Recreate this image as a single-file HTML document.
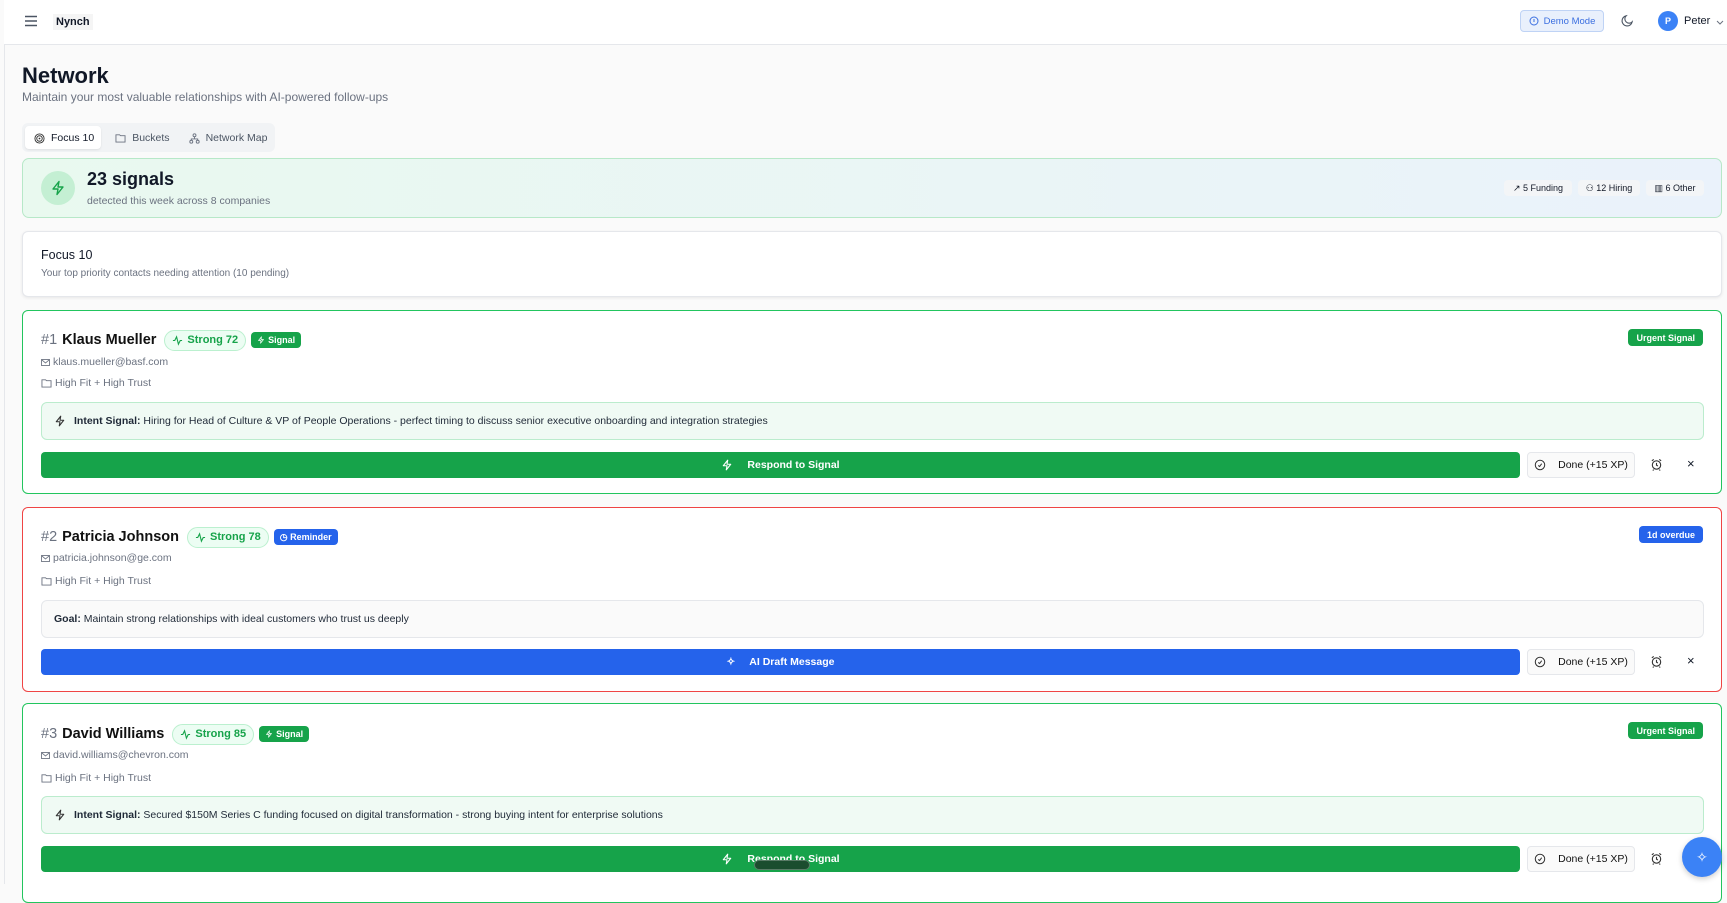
<!DOCTYPE html>
<html><head><meta charset="utf-8"><style>
*{box-sizing:border-box;margin:0;padding:0}
body{width:1727px;height:884px;overflow:hidden;background:#fafafa;font-family:"Liberation Sans",sans-serif;color:#111827;position:relative}
.abs{position:absolute}
.hdr{position:absolute;left:4px;top:0;right:0;height:45px;background:#fff;border-bottom:1px solid #e5e7eb}
.side{position:absolute;left:4px;top:0;bottom:0;width:1px;background:#e5e7eb}
svg{display:block}
.card{position:absolute;left:22px;width:1700px;background:#fff;border-radius:6px}
.name{position:absolute;left:18px;top:18px;height:22px;display:flex;align-items:center;gap:5px;font-size:14.5px}
.num{color:#6b7280}
.nm{font-weight:bold;color:#111}
.pill{display:inline-flex;align-items:center;gap:4px;height:21px;padding:0 7px;border:1px solid #bbf0cf;background:#ecfdf3;border-radius:11px;color:#16a34a;font-size:11px;font-weight:bold;margin-left:3px}
.bdg{display:inline-flex;align-items:center;gap:3px;height:16px;padding:0 6px;border-radius:4px;color:#fff;font-size:9px;font-weight:bold}
.em{position:absolute;left:18px;font-size:10.5px;color:#6b7280;display:flex;align-items:center;gap:3px}
.box{position:absolute;left:18px;width:1663px;height:38px;border-radius:6px;font-size:10.5px;display:flex;align-items:center;padding-left:12px;gap:8px;color:#1f2937}
.btn{position:absolute;left:18px;width:1479px;height:26px;border-radius:4px;color:#fff;font-size:10.5px;font-weight:bold;display:flex;align-items:center;justify-content:center;gap:14px}
.done{position:absolute;left:1504px;width:108px;height:26px;border:1px solid #e5e7eb;border-radius:4px;background:#fafafa;font-size:10.5px;display:flex;align-items:center;justify-content:center;gap:12px;color:#111}
.tr{position:absolute;right:18px;top:18px}
</style></head><body>
<svg width="0" height="0" style="position:absolute">
<defs>
<symbol id="bolt" viewBox="0 0 16 16"><path d="M9 1.5L3 9h5l-1 5.5L13 7H8z" fill="none" stroke="currentColor" stroke-width="1.4" stroke-linejoin="round"/></symbol>
<symbol id="alarm" viewBox="0 0 14 14"><circle cx="7" cy="7.5" r="4.5" fill="none" stroke="#333" stroke-width="1.2"/><path d="M7 5.3v2.4l1.5 1M2 3l2-1.5M12 3l-2-1.5M4 12.5l-1 1M10 12.5l1 1" fill="none" stroke="#333" stroke-width="1.2"/></symbol>
<symbol id="check" viewBox="0 0 14 14"><circle cx="7" cy="7" r="5.5" fill="none" stroke="#333" stroke-width="1.2"/><path d="M5 7.5l1.5 1.3L9 5.5" fill="none" stroke="#333" stroke-width="1.2"/></symbol>
<symbol id="folder" viewBox="0 0 12 11"><path d="M1 2h4l1 1h5v7H1z" fill="none" stroke="#6b7280"/></symbol>
<symbol id="mail" viewBox="0 0 10 8"><rect x=".5" y=".5" width="9" height="7" fill="none" stroke="#6b7280"/><path d="M.5 .8L5 4.5 9.5.8" fill="none" stroke="#6b7280"/></symbol>
<symbol id="act" viewBox="0 0 12 12"><path d="M1 6h2l2-4 2 8 2-4h2" fill="none" stroke="#16a34a" stroke-width="1.2"/></symbol>
</defs></svg>
<div class="side"></div>
<div class="hdr">
  <svg class="abs" style="left:20px;top:15px" width="14" height="12" viewBox="0 0 14 12"><path d="M1 1.5h12M1 6h12M1 10.5h12" stroke="#4b5563" stroke-width="1.4"/></svg>
  <div class="abs" style="left:49px;top:14px;background:#f5f5f5;padding:2px 3px;font-size:11px;font-weight:bold">Nynch</div>
  <div class="abs" style="left:1516px;top:10px;width:84px;height:22px;border:1px solid #bfd3f5;background:#e9f0fc;border-radius:4px;color:#3b6fe0;font-size:9.5px;display:flex;align-items:center;justify-content:center;gap:5px"><svg width="10" height="10" viewBox="0 0 10 10"><circle cx="5" cy="5" r="4" fill="none" stroke="#3b6fe0"/><path d="M5 3v3" stroke="#3b6fe0"/></svg>Demo Mode</div>
  <svg class="abs" style="left:1617px;top:14px" width="13" height="13" viewBox="0 0 14 14"><path d="M12 8.5A5.5 5.5 0 1 1 5.5 2a4.3 4.3 0 0 0 6.5 6.5z" fill="none" stroke="#4b5563" stroke-width="1.2"/></svg>
  <div class="abs" style="left:1654px;top:11px;width:20px;height:20px;border-radius:50%;background:#3b82f6;color:#fff;font-size:9px;font-weight:bold;display:flex;align-items:center;justify-content:center">P</div>
  <div class="abs" style="left:1680px;top:15px;font-size:11px">Peter</div>
  <svg class="abs" style="left:1712px;top:20px" width="8" height="5" viewBox="0 0 8 5"><path d="M1 1l3 3 3-3" fill="none" stroke="#6b7280"/></svg>
</div>

<div class="abs" style="left:22px;top:63px;font-size:22px;font-weight:bold">Network</div>
<div class="abs" style="left:22px;top:90px;font-size:12px;color:#6b7280">Maintain your most valuable relationships with AI-powered follow-ups</div>

<div class="abs" style="left:22px;top:123px;width:253px;height:29px;background:#f1f3f5;border-radius:6px"></div>
<div class="abs" style="left:25px;top:126px;width:76px;height:23px;background:#fff;border-radius:4px;box-shadow:0 1px 2px rgba(0,0,0,.08)"></div>
<div class="abs" style="left:34px;top:132px;display:flex;align-items:center;gap:6px;font-size:10.5px">
  <svg width="11" height="11" viewBox="0 0 12 12"><circle cx="6" cy="6" r="5" fill="none" stroke="#333"/><circle cx="6" cy="6" r="3" fill="none" stroke="#333"/><circle cx="6" cy="6" r="1" fill="#333"/></svg>Focus 10
  <svg style="margin-left:15px" width="11" height="10" viewBox="0 0 12 11"><use href="#folder"/></svg><span style="color:#4b5563">Buckets</span>
  <svg style="margin-left:13px" width="11" height="11" viewBox="0 0 12 12"><circle cx="6" cy="2.5" r="1.6" fill="none" stroke="#6b7280"/><circle cx="2.5" cy="9.5" r="1.6" fill="none" stroke="#6b7280"/><circle cx="9.5" cy="9.5" r="1.6" fill="none" stroke="#6b7280"/><path d="M6 4v2.5M2.5 8V6.5h7V8" fill="none" stroke="#6b7280"/></svg><span style="color:#4b5563">Network Map</span>
</div>

<div class="abs" style="left:22px;top:158px;width:1700px;height:60px;border:1px solid #b7e8c8;border-radius:7px;background:linear-gradient(90deg,#e9f9ef,#eaf2fb)">
  <div class="abs" style="left:18px;top:12px;width:34px;height:34px;border-radius:50%;background:#c4efd3;display:flex;align-items:center;justify-content:center;color:#16a34a"><svg width="16" height="16"><use href="#bolt"/></svg></div>
  <div class="abs" style="left:64px;top:10px;font-size:18px;font-weight:bold">23 signals</div>
  <div class="abs" style="left:64px;top:36px;font-size:10.5px;color:#6b7280">detected this week across 8 companies</div>
  <div class="abs" style="left:1481px;top:21px;width:68px;height:16px;background:#f3f5f7;border-radius:4px;font-size:9px;display:flex;align-items:center;justify-content:center">↗ 5 Funding</div>
  <div class="abs" style="left:1555px;top:21px;width:62px;height:16px;background:#f3f5f7;border-radius:4px;font-size:9px;display:flex;align-items:center;justify-content:center">⚇ 12 Hiring</div>
  <div class="abs" style="left:1623px;top:21px;width:58px;height:16px;background:#f3f5f7;border-radius:4px;font-size:9px;display:flex;align-items:center;justify-content:center">▥ 6 Other</div>
</div>

<div class="abs" style="left:22px;top:231px;width:1700px;height:66px;background:#fff;border:1px solid #e5e7eb;border-radius:6px;box-shadow:0 1px 3px rgba(0,0,0,.08)">
  <div class="abs" style="left:18px;top:16px;font-size:12.5px">Focus 10</div>
  <div class="abs" style="left:18px;top:36px;font-size:10px;color:#6b7280">Your top priority contacts needing attention (10 pending)</div>
</div>

<!-- card 1 -->
<div class="card" style="top:310px;height:184px;border:1px solid #22c55e">
  <div class="name"><span class="num">#1</span><span class="nm">Klaus Mueller</span><span class="pill"><svg width="11" height="11"><use href="#act"/></svg>Strong 72</span><span class="bdg" style="background:#16a34a"><svg width="8" height="8" style="color:#fff"><use href="#bolt"/></svg>Signal</span></div>
  <div class="bdg tr" style="background:#16a34a;height:17px;padding:0 8px">Urgent Signal</div>
  <div class="em" style="top:45px"><svg width="9" height="7"><use href="#mail"/></svg>klaus.mueller@basf.com</div>
  <div class="em" style="top:66px"><svg width="11" height="10"><use href="#folder"/></svg>High Fit + High Trust</div>
  <div class="box" style="top:91px;background:#f0faf4;border:1px solid #bbeccd"><svg width="12" height="12" style="color:#333"><use href="#bolt"/></svg><span><b>Intent Signal:</b> Hiring for Head of Culture &amp; VP of People Operations - perfect timing to discuss senior executive onboarding and integration strategies</span></div>
  <div class="btn" style="top:141px;background:#16a34a"><svg width="12" height="12" style="color:#fff"><use href="#bolt"/></svg>Respond to Signal</div>
  <div class="done" style="top:141px"><svg width="12" height="12"><use href="#check"/></svg>Done (+15 XP)</div>
  <svg class="abs" style="left:1627px;top:147px" width="13" height="13"><use href="#alarm"/></svg>
  <div class="abs" style="left:1664px;top:145px;font-size:13px">×</div>
</div>

<!-- card 2 -->
<div class="card" style="top:507px;height:185px;border:1px solid #ef4444">
  <div class="name"><span class="num">#2</span><span class="nm">Patricia Johnson</span><span class="pill"><svg width="11" height="11"><use href="#act"/></svg>Strong 78</span><span class="bdg" style="background:#2563eb">◷ Reminder</span></div>
  <div class="bdg tr" style="background:#2563eb;height:17px;padding:0 8px">1d overdue</div>
  <div class="em" style="top:44px"><svg width="9" height="7"><use href="#mail"/></svg>patricia.johnson@ge.com</div>
  <div class="em" style="top:67px"><svg width="11" height="10"><use href="#folder"/></svg>High Fit + High Trust</div>
  <div class="box" style="top:92px;background:#fafafa;border:1px solid #e5e7eb"><span><b>Goal:</b> Maintain strong relationships with ideal customers who trust us deeply</span></div>
  <div class="btn" style="top:141px;background:#2563eb"><span>✧</span>AI Draft Message</div>
  <div class="done" style="top:141px"><svg width="12" height="12"><use href="#check"/></svg>Done (+15 XP)</div>
  <svg class="abs" style="left:1627px;top:147px" width="13" height="13"><use href="#alarm"/></svg>
  <div class="abs" style="left:1664px;top:145px;font-size:13px">×</div>
</div>

<!-- card 3 -->
<div class="card" style="top:703px;height:200px;border:1px solid #22c55e">
  <div class="name" style="top:19px"><span class="num">#3</span><span class="nm">David Williams</span><span class="pill"><svg width="11" height="11"><use href="#act"/></svg>Strong 85</span><span class="bdg" style="background:#16a34a"><svg width="8" height="8" style="color:#fff"><use href="#bolt"/></svg>Signal</span></div>
  <div class="bdg tr" style="background:#16a34a;height:17px;padding:0 8px">Urgent Signal</div>
  <div class="em" style="top:45px"><svg width="9" height="7"><use href="#mail"/></svg>david.williams@chevron.com</div>
  <div class="em" style="top:68px"><svg width="11" height="10"><use href="#folder"/></svg>High Fit + High Trust</div>
  <div class="box" style="top:92px;background:#f0faf4;border:1px solid #bbeccd"><svg width="12" height="12" style="color:#333"><use href="#bolt"/></svg><span><b>Intent Signal:</b> Secured $150M Series C funding focused on digital transformation - strong buying intent for enterprise solutions</span></div>
  <div class="btn" style="top:142px;background:#16a34a"><svg width="12" height="12" style="color:#fff"><use href="#bolt"/></svg>Respond to Signal</div>
  <div class="done" style="top:142px"><svg width="12" height="12"><use href="#check"/></svg>Done (+15 XP)</div>
  <svg class="abs" style="left:1627px;top:148px" width="13" height="13"><use href="#alarm"/></svg>
</div>

<div class="abs" style="left:754px;top:860px;width:56px;height:10px;border-radius:5px;background:#1b4d2e;border:1px solid #5a7a66"></div>
<div class="abs" style="left:1682px;top:837px;width:40px;height:40px;border-radius:50%;background:#3b82f6;color:#fff;display:flex;align-items:center;justify-content:center;font-size:14px;box-shadow:0 2px 6px rgba(0,0,0,.2)">✧</div>
</body></html>
